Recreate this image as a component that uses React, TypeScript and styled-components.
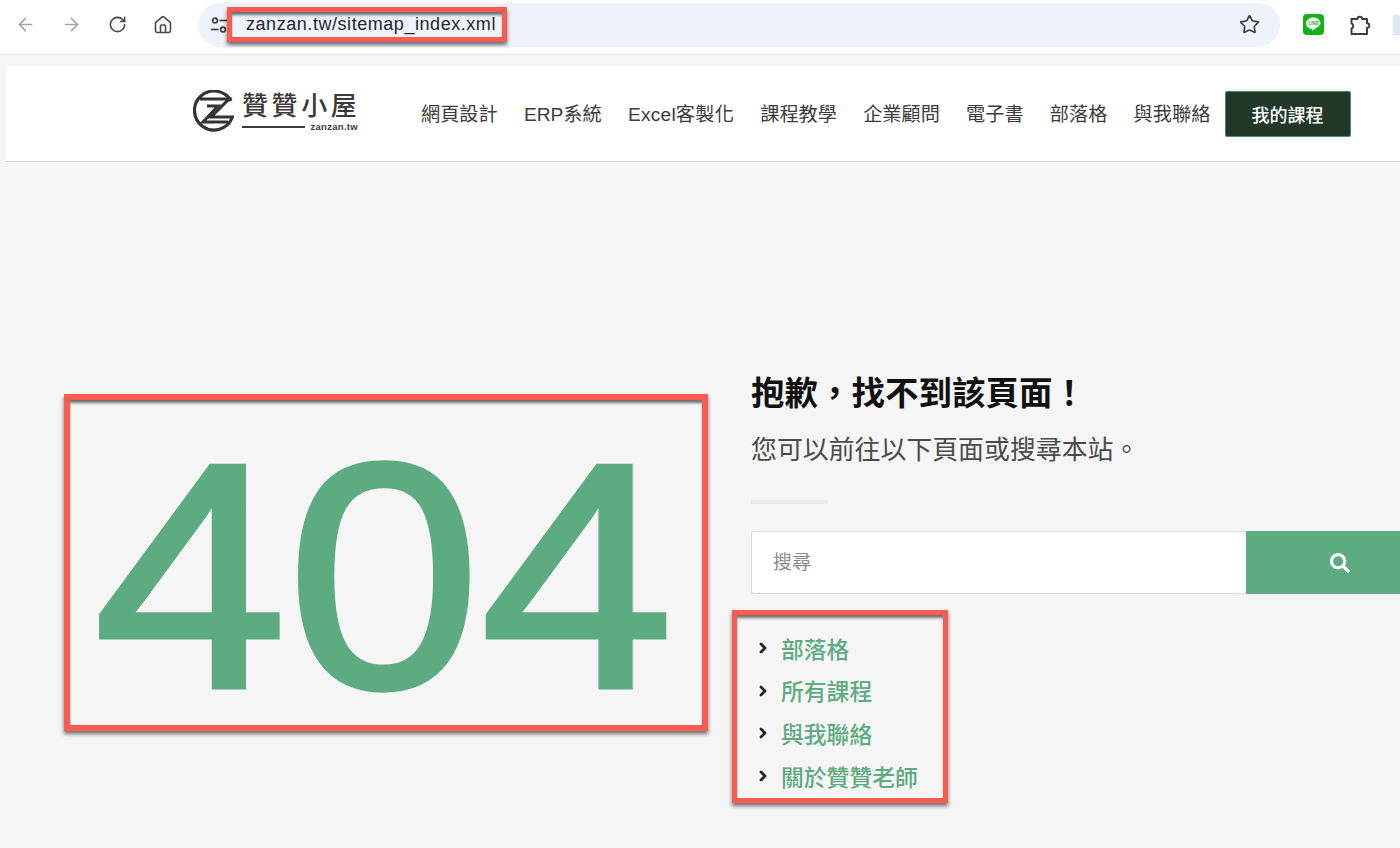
import styled, { createGlobalStyle } from "styled-components";
import { ArrowLeft, ArrowRight, RotateCw, Home, Star, ChevronRight } from "lucide-react";
import { FaSearch } from "react-icons/fa";

const GlobalStyle = createGlobalStyle`
  html, body {
    margin: 0;
    padding: 0;
    background: #f5f5f5;
    font-family: "Liberation Sans", "Noto Sans CJK TC", sans-serif;
  }
`;

const Page = styled.div`
  position: relative;
  width: 1400px;
  height: 848px;
  overflow: hidden;
  background: #f5f5f5;
`;

const Toolbar = styled.div`
  display: flex;
  align-items: center;
  height: 49px;
  padding-left: 14px;
  padding-bottom: 5px;
  background: #fff;
  border-bottom: 1px solid #e4e4e4;
`;

const NavIcon = styled.span<{ $muted?: boolean }>`
  display: flex;
  flex: none;
  justify-content: center;
  width: 22px;
  margin-right: 24px;
  color: ${(p) => (p.$muted ? "#a0a3a6" : "#47494c")};
`;

const AddressBar = styled.div`
  display: flex;
  flex: none;
  align-items: center;
  width: 1082px;
  height: 44px;
  padding: 0 20px 0 12px;
  box-sizing: border-box;
  border-radius: 22px;
  background: #edf2fb;
`;

const Url = styled.span`
  flex: 1;
  margin-left: 18px;
  font-size: 18px;
  letter-spacing: 0.55px;
  color: #26282b;
`;

const LineBadge = styled.svg`
  flex: none;
  margin-left: 23px;
`;

const PuzzleIcon = styled.svg`
  flex: none;
  margin-left: 24px;
`;

const Avatar = styled.span`
  flex: none;
  width: 10px;
  height: 20px;
  margin-left: 21px;
  background: #dfe7f5;
`;

const SiteHeader = styled.header`
  display: flex;
  align-items: center;
  height: 93px;
  margin: 11px 0 0 6px;
  padding: 0 0 2px 187px;
  background: #fff;
  border-bottom: 1px solid #d9d9d9;
`;

const Logo = styled.a`
  display: flex;
  align-items: center;
  gap: 7px;
  width: 228px;
  margin-top: -2px;
`;

const LogoWords = styled.div`
  display: flex;
  flex-direction: column;
  width: 116px;
  color: #3a3a3a;
`;

const LogoName = styled.span`
  font-size: 26px;
  line-height: 30px;
  font-weight: 500;
  letter-spacing: 3.6px;
  white-space: nowrap;
`;

const LogoSub = styled.div`
  display: flex;
  align-items: center;
  justify-content: space-between;
  font-size: 9.5px;
  line-height: 11px;
  font-weight: 700;
  letter-spacing: 0.3px;
`;

const LogoRule = styled.span`
  width: 63px;
  height: 2px;
  background: #3a3a3a;
`;

const Nav = styled.nav`
  display: flex;
  align-items: center;
  gap: 26.2px;
`;

const NavLink = styled.a<{ $latin?: boolean }>`
  font-size: 19.2px;
  letter-spacing: ${(p) => (p.$latin ? "0.2px" : "0")};
  color: #3c3c3c;
  white-space: nowrap;
`;

const CourseButton = styled.a`
  display: flex;
  align-items: center;
  justify-content: center;
  width: 126px;
  height: 46px;
  margin: 2px 0 0 -12px;
  box-sizing: border-box;
  border: 1px solid #4d8a66;
  border-radius: 2px;
  background: #22392a;
  color: #fff;
  font-size: 18px;
  font-weight: 500;
`;

const Main = styled.main`
  display: grid;
  grid-template-columns: 751px 1fr;
`;

const ErrorColumn = styled.div`
  display: flex;
  justify-content: center;
  padding-top: 239px;
  margin-left: 16px;
`;

const ErrorCode = styled.div`
  font-size: 321px;
  line-height: 350px;
  color: #5dab80;
  -webkit-text-stroke: 5px #5dab80;
  transform: scaleX(1.083);
`;

const Aside = styled.div`
  display: flex;
  flex-direction: column;
  padding-top: 210px;
`;

const Title = styled.h1`
  margin: 0;
  font-size: 33.5px;
  line-height: 44px;
  font-weight: 700;
  color: #111;
  white-space: nowrap;
`;

const Lead = styled.p`
  margin: 16px 0 0;
  font-size: 25.9px;
  line-height: 36px;
  color: #4a4a4a;
  white-space: nowrap;
`;

const Divider = styled.div`
  width: 77px;
  height: 4px;
  margin-top: 32px;
  background: #ebebeb;
`;

const SearchRow = styled.form`
  display: flex;
  height: 63px;
  margin-top: 27px;
`;

const SearchInput = styled.input`
  width: 495px;
  box-sizing: border-box;
  padding: 0 21px;
  border: 1px solid #dcdcdc;
  border-right: 0;
  border-radius: 3px 0 0 3px;
  background: #fff;
  font: 19px "Liberation Sans", "Noto Sans CJK TC", sans-serif;
  outline: none;
  &::placeholder {
    color: #8b8b8b;
  }
`;

const SearchButton = styled.button`
  display: flex;
  align-items: center;
  justify-content: center;
  width: 188px;
  flex: none;
  padding: 0;
  border: 0;
  background: #5dab80;
  color: #fff;
`;

const Links = styled.ul`
  display: flex;
  flex-direction: column;
  gap: 8.7px;
  margin: 37px 0 0;
  padding: 0 0 0 4px;
  list-style: none;
`;

const LinkRow = styled.li`
  display: flex;
  align-items: center;
  gap: 10px;
  height: 34px;
  color: #222;
`;

const LinkText = styled.a`
  font-size: 22.8px;
  font-weight: 500;
  color: #5dab80;
`;

const Callout = styled.div<{ $x: number; $y: number; $w: number; $h: number; $b?: number }>`
  position: absolute;
  left: ${(p) => p.$x}px;
  top: ${(p) => p.$y}px;
  width: ${(p) => p.$w}px;
  height: ${(p) => p.$h}px;
  box-sizing: border-box;
  border: ${(p) => p.$b ?? 5}px solid #f85c50;
  box-shadow: 0 3px 4px rgba(0, 0, 0, 0.55), inset 0 4px 3px -1px rgba(0, 0, 0, 0.55);
  pointer-events: none;
`;

const links = ["部落格", "所有課程", "與我聯絡", "關於贊贊老師"];
const menu = ["網頁設計", "ERP系統", "Excel客製化", "課程教學", "企業顧問", "電子書", "部落格", "與我聯絡"];

function TuneIcon() {
  return (
    <svg width="18" height="18" viewBox="0 0 18 18" fill="none" stroke="#3f4144" strokeWidth="1.7">
      <circle cx="5" cy="4.5" r="2.4" />
      <path d="M9.5 4.5H17" />
      <circle cx="13" cy="13.5" r="2.4" />
      <path d="M1 13.5H8.5" />
    </svg>
  );
}

function LineIcon() {
  return (
    <LineBadge width="21" height="21" viewBox="0 0 21 21">
      <rect width="21" height="21" rx="4" fill="#12b312" />
      <path d="M10.5 3.5C5.9 3.5 3 6.2 3 9.4c0 2.9 2.4 5 5.6 5.5.6.1.4 1.2.2 1.8 1.6-.6 4.6-2.4 6.5-4.2 1.3-1.1 2.2-1.9 2.2-3.1 0-3.2-3-5.9-7-5.9z" fill="#fff" />
      <text x="10.5" y="11.2" textAnchor="middle" fontSize="4.6" fontWeight="700" fill="#12b312" fontFamily="Liberation Sans, sans-serif">LINE</text>
    </LineBadge>
  );
}

function ExtensionIcon() {
  return (
    <PuzzleIcon width="24" height="24" viewBox="0 0 24 24" fill="none" stroke="#3c3e41" strokeWidth="2" strokeLinejoin="round">
      <path d="M3.5 6H9.5a2.3 2.3 0 0 1 4.6 0H19V10.2a2.3 2.3 0 0 1 0 4.6V21H3.5V15.6a2.8 2.8 0 0 0 0-5.2Z" />
    </PuzzleIcon>
  );
}

function LogoMark() {
  return (
    <svg width="42" height="44" viewBox="0 0 42 44" fill="none" stroke="#333">
      <path d="M39 28A19.5 19.5 0 1 1 38 11" strokeWidth="3.2" />
      <path d="M7 9H36L18 27H41" strokeWidth="3" />
      <path d="M14 16H25L10 32H35" strokeWidth="3" />
    </svg>
  );
}

export default function App() {
  return (
    <Page>
      <GlobalStyle />
      <Toolbar>
        <NavIcon $muted><ArrowLeft size={21} strokeWidth={1.7} /></NavIcon>
        <NavIcon $muted><ArrowRight size={21} strokeWidth={1.7} /></NavIcon>
        <NavIcon><RotateCw size={19} strokeWidth={2} /></NavIcon>
        <NavIcon><Home size={20} strokeWidth={1.9} /></NavIcon>
        <AddressBar>
          <TuneIcon />
          <Url>zanzan.tw/sitemap_index.xml</Url>
          <Star size={21} strokeWidth={1.9} color="#3c3e41" />
        </AddressBar>
        <LineIcon />
        <ExtensionIcon />
        <Avatar />
      </Toolbar>
      <SiteHeader>
        <Logo>
          <LogoMark />
          <LogoWords>
            <LogoName>贊贊小屋</LogoName>
            <LogoSub>
              <LogoRule />
              zanzan.tw
            </LogoSub>
          </LogoWords>
        </Logo>
        <Nav>
          {menu.map((item) => (
            <NavLink key={item} $latin={item.startsWith("Excel")}>{item}</NavLink>
          ))}
          <CourseButton>我的課程</CourseButton>
        </Nav>
      </SiteHeader>
      <Main>
        <ErrorColumn>
          <ErrorCode>404</ErrorCode>
        </ErrorColumn>
        <Aside>
          <Title>{"抱歉\uFF0C找不到該頁面\uFF01"}</Title>
          <Lead>您可以前往以下頁面或搜尋本站。</Lead>
          <Divider />
          <SearchRow>
            <SearchInput placeholder="搜尋" />
            <SearchButton type="button" aria-label="搜尋"><FaSearch size={20} /></SearchButton>
          </SearchRow>
          <Links>
            {links.map((item) => (
              <LinkRow key={item}>
                <ChevronRight size={16} strokeWidth={4} />
                <LinkText>{item}</LinkText>
              </LinkRow>
            ))}
          </Links>
        </Aside>
      </Main>
      <Callout $x={227} $y={7} $w={280} $h={35} />
      <Callout $x={64} $y={394} $w={644} $h={337} $b={6} />
      <Callout $x={732} $y={610} $w={216} $h={193} />
    </Page>
  );
}
